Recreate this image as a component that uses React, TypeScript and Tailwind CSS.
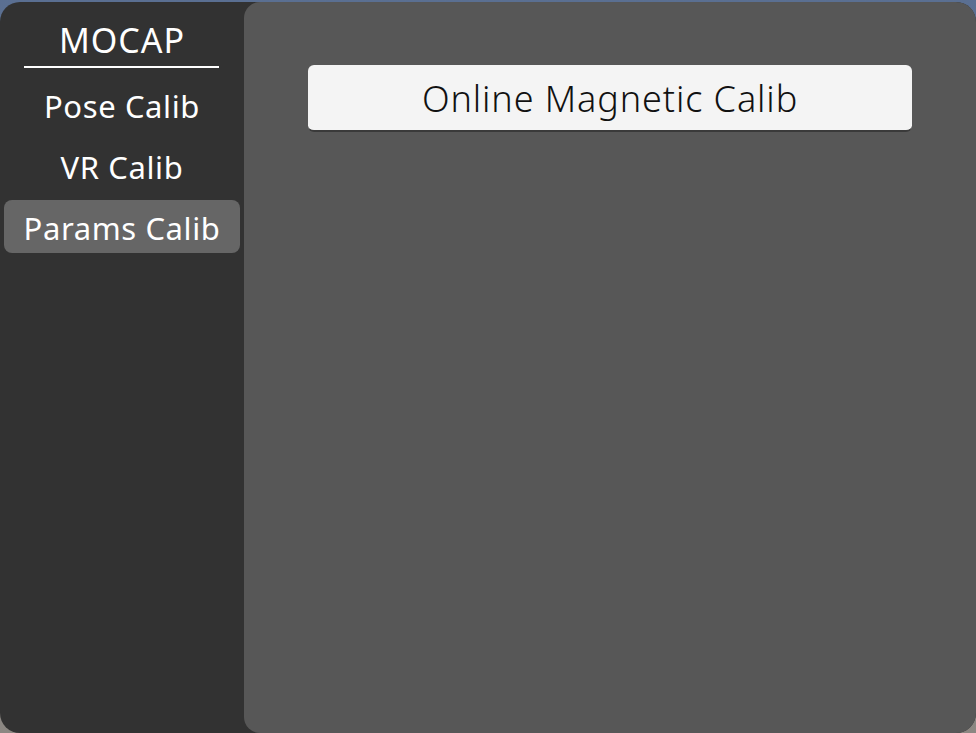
import React from "react";

export default function App() {
  const font = { fontFamily: '"Noto Sans", "Open Sans", sans-serif' };
  return (
    <div
      className="w-[976px] h-[733px] bg-gradient-to-b from-[#5a6f92] to-[#8c8782] pt-[2px] overflow-hidden"
      style={font}
    >
      <div className="flex h-[731px] rounded-[20px] bg-[#323232] overflow-hidden">
        <div className="w-[244px] shrink-0 flex flex-col items-center pt-[18px]">
          <div className="text-[34px] leading-[40px] text-white tracking-[1px]">MOCAP</div>
          <div className="w-[195px] h-[2px] bg-white mt-[6px] ml-[-1px]" />
          <div className="mt-[18px] text-[31px] leading-[40px] text-white tracking-[0.6px]">Pose Calib</div>
          <div className="mt-[21px] text-[31px] leading-[40px] text-white tracking-[0.6px]">VR Calib</div>
          <div className="mt-[13px] self-stretch mx-[4px] h-[53px] pt-[4px] leading-[48px] rounded-[8px] bg-[#666666] text-center text-[31px] text-white tracking-[0.6px]">
            Params Calib
          </div>
        </div>
        <div className="flex-1 bg-[#575757] rounded-[16px] pt-[63px] pl-[64px] pr-[64px]">
          <div className="h-[67px] pt-[3px] leading-[62px] rounded-[6px] bg-[#f4f4f4] border-b-[2px] border-[#3a3a3a] text-center text-[36px] font-light text-[#111111] tracking-[0.9px]">
            Online Magnetic Calib
          </div>
        </div>
      </div>
    </div>
  );
}
